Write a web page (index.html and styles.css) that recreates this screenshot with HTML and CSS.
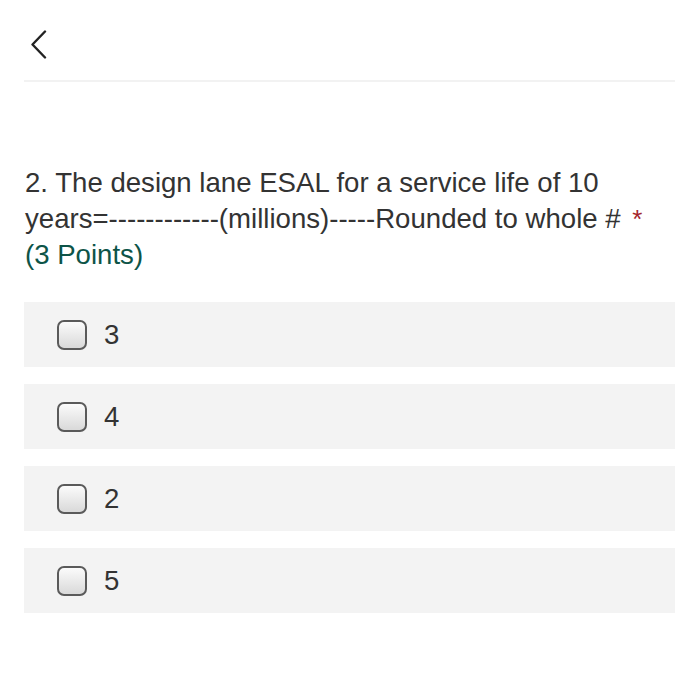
FILE: index.html
```html
<!DOCTYPE html>
<html>
<head>
<meta charset="utf-8">
<link rel="stylesheet" href="styles.css">
</head>
<body>
<div class="page">
  <header class="topbar">
    <svg class="back" width="16" height="30" viewBox="0 0 16 30">
      <polyline points="14,1.5 1.5,14.5 14,27.5" fill="none" stroke="#222" stroke-width="2.4" stroke-linecap="round" stroke-linejoin="round"/>
    </svg>
  </header>
  <div class="divider"></div>
  <div class="question">
    <span class="qtext">2. The design lane ESAL for a service life of 10 years=------------(millions)-----Rounded to whole #</span>
    <span class="req">*</span>
    <span class="points">(3 Points)</span>
  </div>
  <div class="options">
    <label class="option"><span class="box"></span><span class="label">3</span></label>
    <label class="option"><span class="box"></span><span class="label">4</span></label>
    <label class="option"><span class="box"></span><span class="label">2</span></label>
    <label class="option"><span class="box"></span><span class="label">5</span></label>
  </div>
</div>
</body>
</html>
```

FILE: styles.css
```css
html, body {
  margin: 0;
  padding: 0;
  background: #ffffff;
}
body {
  font-family: "Liberation Sans", Arial, sans-serif;
  color: #333333;
}
.page {
  padding: 0 25px 0 24px;
}
.topbar {
  height: 80px;
  display: flex;
  align-items: flex-start;
}
.back {
  display: block;
  margin-top: 30px;
  margin-left: 7px;
}
.divider {
  height: 2px;
  background: #f2f2f2;
}
.question {
  margin-top: 83px;
  font-size: 27.6px;
  line-height: 36px;
  padding-left: 1px;
}
.req {
  color: #a4262c;
  font-size: 26px;
  margin-left: 4px;
}
.points {
  display: block;
  color: #0d5448;
}
.options {
  margin-top: 29px;
  display: flex;
  flex-direction: column;
  gap: 17px;
}
.option {
  height: 65px;
  background: #f3f3f3;
  display: flex;
  align-items: center;
  padding-left: 33px;
  gap: 17px;
}
.box {
  width: 26px;
  height: 26px;
  border: 2px solid #5a5a5a;
  border-radius: 7px;
  background: linear-gradient(#fbfbfb, #d9d9d9);
}
.label {
  font-size: 27.6px;
  color: #333333;
}
```
